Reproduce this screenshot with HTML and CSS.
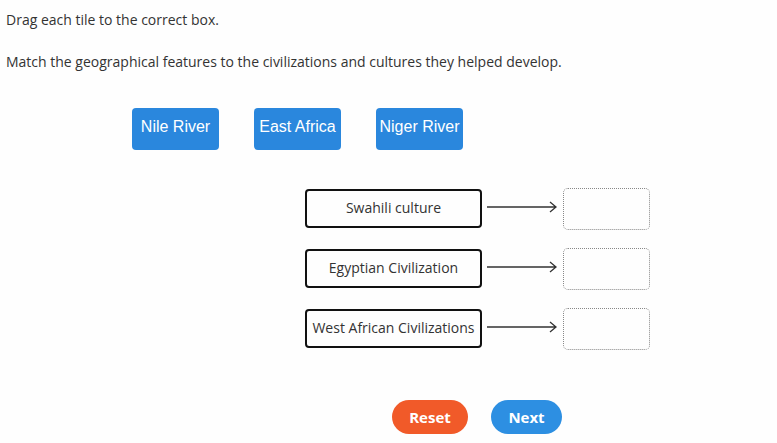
FILE: index.html
```html
<!DOCTYPE html>
<html lang="en">
<head>
<meta charset="utf-8">
<title>Drag each tile</title>
<link rel="stylesheet" href="styles.css">
</head>
<body>
<main class="page">
  <p class="prompt">Drag each tile to the correct box.</p>
  <p class="prompt prompt-second">Match the geographical features to the civilizations and cultures they helped develop.</p>

  <div class="tiles">
    <div class="tile">Nile River</div>
    <div class="tile">East Africa</div>
    <div class="tile">Niger River</div>
  </div>

  <div class="matches">
    <div class="match-row">
      <div class="label-box">Swahili culture</div>
      <svg class="arrow" width="72" height="14" viewBox="0 0 72 14"><path d="M0 7H69M63 2L69 7L63 12" fill="none" stroke="#333" stroke-width="1.3"/></svg>
      <div class="drop-box"></div>
    </div>
    <div class="match-row">
      <div class="label-box">Egyptian Civilization</div>
      <svg class="arrow" width="72" height="14" viewBox="0 0 72 14"><path d="M0 7H69M63 2L69 7L63 12" fill="none" stroke="#333" stroke-width="1.3"/></svg>
      <div class="drop-box"></div>
    </div>
    <div class="match-row">
      <div class="label-box">West African Civilizations</div>
      <svg class="arrow" width="72" height="14" viewBox="0 0 72 14"><path d="M0 7H69M63 2L69 7L63 12" fill="none" stroke="#333" stroke-width="1.3"/></svg>
      <div class="drop-box"></div>
    </div>
  </div>

  <div class="actions">
    <button class="btn btn-reset" type="button">Reset</button>
    <button class="btn btn-next" type="button">Next</button>
  </div>
</main>
</body>
</html>
```
FILE: styles.css
```css
html, body {
  margin: 0;
  background: #fefefe;
}
body {
  font-family: "Open Sans", "DejaVu Sans", sans-serif;
  font-size: 14px;
  color: #333;
}
.page {
  padding: 10px 6px 0 6px;
}
.prompt {
  margin: 0;
  line-height: 20px;
}
.prompt-second {
  margin-top: 22px;
}
.tiles {
  display: flex;
  gap: 35px;
  margin: 36px 0 0 126px;
}
.tile {
  width: 87px;
  height: 42px;
  box-sizing: border-box;
  padding-bottom: 4px;
  background: #2a87dd;
  color: #fff;
  border-radius: 4px;
  font-family: "Liberation Sans", Arial, sans-serif;
  font-size: 16px;
  display: flex;
  align-items: center;
  justify-content: center;
  white-space: nowrap;
}
.matches {
  display: flex;
  flex-direction: column;
  gap: 18px;
  margin: 38px 0 0 299px;
}
.match-row {
  display: flex;
  align-items: flex-start;
  height: 42px;
}
.label-box {
  width: 177px;
  height: 39px;
  margin-top: 1px;
  box-sizing: border-box;
  padding-bottom: 2px;
  border: 2px solid #111;
  border-radius: 4px;
  display: flex;
  align-items: center;
  justify-content: center;
  white-space: nowrap;
}
.arrow {
  margin: 12px 4px 0 5px;
  display: block;
}
.drop-box {
  width: 87px;
  height: 42px;
  box-sizing: border-box;
  border: 1px dotted #888;
  border-radius: 5px;
}
.actions {
  display: flex;
  gap: 23px;
  margin: 50px 0 0 386px;
}
.btn {
  height: 34px;
  border: none;
  border-radius: 17px;
  color: #fff;
  font-family: "Open Sans", sans-serif;
  font-weight: 700;
  font-size: 15px;
  padding: 0;
}
.btn-reset {
  width: 76px;
  background: #f15a29;
}
.btn-next {
  width: 71px;
  background: #2d8fe2;
}
```
